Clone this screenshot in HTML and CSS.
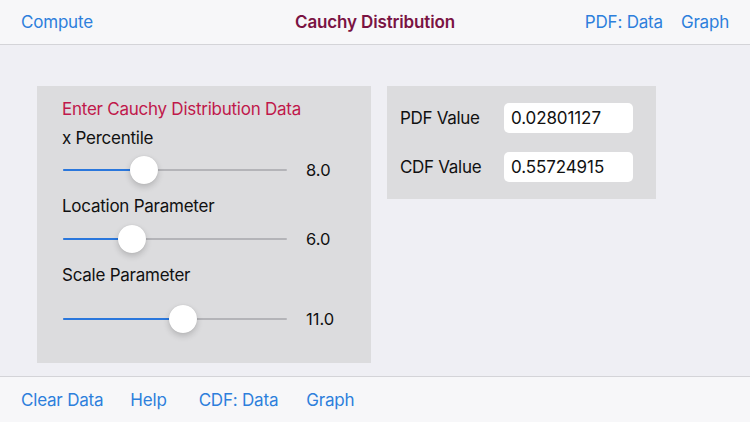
FILE: index.html
```html
<!DOCTYPE html>
<html>
<head>
<meta charset="utf-8">
<link rel="stylesheet" href="styles.css">
</head>
<body>
<div class="app">
  <header class="topbar">
    <span class="link">Compute</span>
    <span class="title">Cauchy Distribution</span>
    <div class="right-links">
      <span class="link">PDF: Data</span>
      <span class="link">Graph</span>
    </div>
  </header>
  <main class="content">
    <section class="panel input-panel">
      <div class="panel-title">Enter Cauchy Distribution Data</div>
      <div class="label l1">x Percentile</div>
      <div class="slider-row r1">
        <div class="slider">
          <div class="track"></div>
          <div class="fill" style="width:81px"></div>
          <div class="thumb" style="left:67px"></div>
        </div>
        <span class="value">8.0</span>
      </div>
      <div class="label l2">Location Parameter</div>
      <div class="slider-row r2">
        <div class="slider">
          <div class="track"></div>
          <div class="fill" style="width:69px"></div>
          <div class="thumb" style="left:55px"></div>
        </div>
        <span class="value">6.0</span>
      </div>
      <div class="label l3">Scale Parameter</div>
      <div class="slider-row r3">
        <div class="slider">
          <div class="track"></div>
          <div class="fill" style="width:120px"></div>
          <div class="thumb" style="left:106px"></div>
        </div>
        <span class="value">11.0</span>
      </div>
    </section>
    <section class="panel output-panel">
      <div class="out-row">
        <span class="out-label">PDF Value</span>
        <div class="out-field">0.02801127</div>
      </div>
      <div class="out-row">
        <span class="out-label">CDF Value</span>
        <div class="out-field">0.55724915</div>
      </div>
    </section>
  </main>
  <footer class="bottombar">
    <span class="link b-clear">Clear Data</span>
    <span class="link b-help">Help</span>
    <span class="link b-cdf">CDF: Data</span>
    <span class="link b-graph">Graph</span>
  </footer>
</div>
</body>
</html>
```
FILE: styles.css
```css
* { box-sizing: border-box; }
html, body {
  margin: 0;
  padding: 0;
}
body {
  font-family: Inter, "Liberation Sans", sans-serif;
  background: #efeff4;
  width: 750px;
  height: 422px;
  overflow: hidden;
}
.app {
  display: flex;
  flex-direction: column;
  height: 422px;
}
.topbar {
  height: 45px;
  flex: none;
  background: #f7f7f9;
  border-bottom: 1px solid #d4d4d8;
  display: flex;
  align-items: center;
  justify-content: space-between;
  padding: 0 21px 0 21px;
  position: relative;
  font-size: 17px;
}
.link {
  color: #2d7fdc;
  font-size: 17px;
  letter-spacing: -0.2px;
}
.title {
  position: absolute;
  left: 0;
  right: 0;
  text-align: center;
  color: #7a1343;
  font-weight: 600;
  font-size: 17px;
  letter-spacing: -0.15px;
  pointer-events: none;
}
.right-links {
  display: flex;
  gap: 18px;
}
.content {
  flex: 1;
  display: flex;
  align-items: flex-start;
  gap: 16px;
  padding: 41px 0 0 37px;
}
.panel {
  background: #dcdcde;
}
.input-panel {
  width: 334px;
  height: 277px;
  padding: 12px 0 0 25px;
}
.panel-title {
  color: #c0184b;
  font-size: 17px;
  line-height: 22px;
  letter-spacing: -0.25px;
}
.label {
  color: #111;
  font-size: 17px;
  line-height: 22px;
  letter-spacing: -0.25px;
}
.l1 { margin-top: 7px; }
.l2 { margin-top: 9px; }
.l3 { margin-top: 9px; }
.slider-row {
  display: flex;
  align-items: center;
  height: 32px;
}
.r1 { margin-top: 5px; }
.r2 { margin-top: 6px; }
.r3 { margin-top: 17px; }
.slider {
  position: relative;
  width: 224px;
  height: 32px;
  margin-left: 1px;
}
.track {
  position: absolute;
  left: 0;
  right: 0;
  top: 15px;
  height: 2px;
  background: #b4b4b8;
  border-radius: 1px;
}
.fill {
  position: absolute;
  left: 0;
  top: 15px;
  height: 2px;
  background: #2a77dc;
  border-radius: 1px;
}
.thumb {
  position: absolute;
  top: 2px;
  width: 28px;
  height: 28px;
  border-radius: 50%;
  background: #fff;
  box-shadow: 0 3px 6px rgba(0,0,0,0.18), 0 0 1px rgba(0,0,0,0.15);
}
.value {
  margin-left: 19px;
  font-size: 16.5px;
  color: #111;
}
.output-panel {
  width: 269px;
  height: 113px;
  padding: 17px 0 0 13px;
  display: flex;
  flex-direction: column;
  gap: 19px;
}
.out-row {
  display: flex;
  align-items: center;
  height: 30px;
}
.out-label {
  width: 104px;
  font-size: 17px;
  color: #111;
  letter-spacing: -0.3px;
}
.out-field {
  width: 129px;
  height: 30px;
  background: #fff;
  border-radius: 5px;
  padding-left: 7px;
  display: flex;
  align-items: center;
  font-size: 17px;
  letter-spacing: -0.1px;
  color: #111;
}
.bottombar {
  height: 46px;
  flex: none;
  background: #f7f7f9;
  border-top: 1px solid #d4d4d8;
  display: flex;
  align-items: center;
  padding: 0 0 0 21px;
}
.b-help { margin-left: 27px; }
.b-cdf { margin-left: 32px; }
.b-graph { margin-left: 28px; }
```
